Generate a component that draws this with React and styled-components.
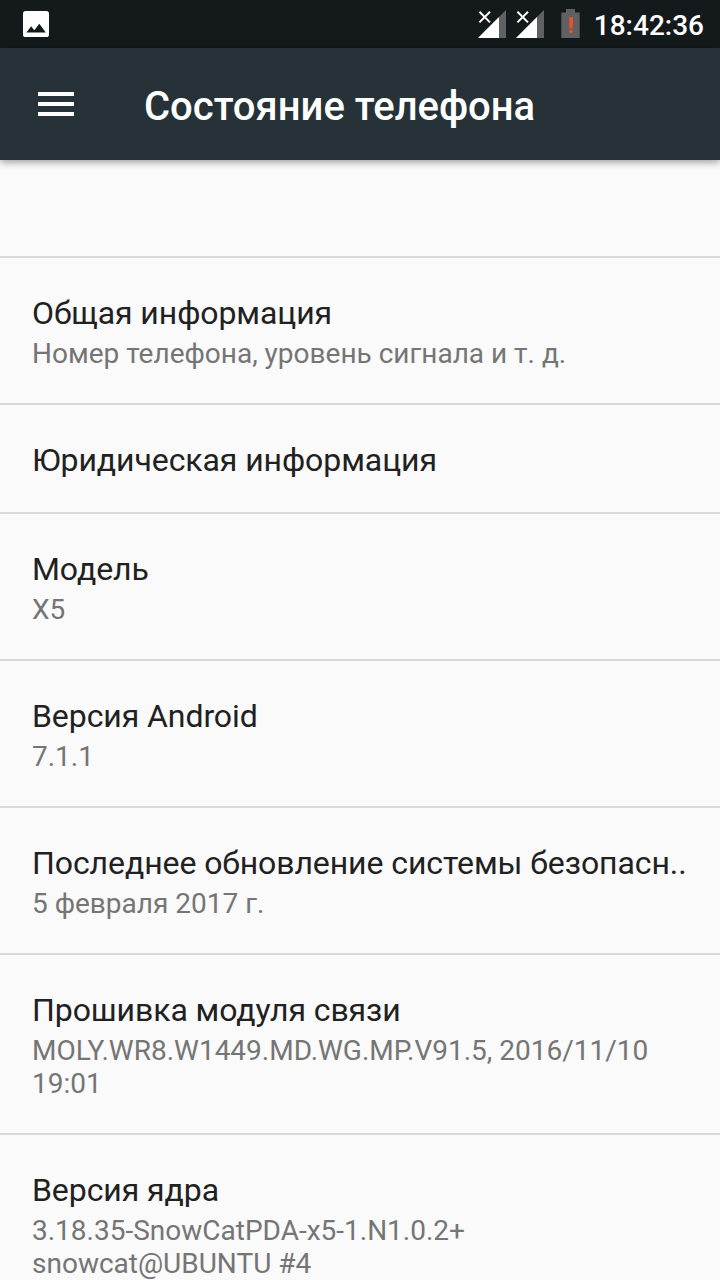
import styled, { createGlobalStyle } from "styled-components";

const GlobalStyle = createGlobalStyle`
    body {
        margin: 0;
        background-color: #fafafa;
        font-family: Roboto, "Noto Sans", sans-serif;
    }
`
const StyleScreen = styled.div`
    display: flex;
    flex-direction: column;
    width: 720px;
    height: 1280px;
    overflow: hidden;
    background-color: #fafafa;
`
const StyleStatusBar = styled.div`
    display: flex;
    flex: none;
    align-items: center;
    justify-content: space-between;
    height: 48px;
    padding: 0 16px 0 22px;
    box-sizing: border-box;
    background-color: #14191c;
    svg {
        display: block;
    }
`
const StyleStatusIcons = styled.div`
    display: flex;
    align-items: center;
`
const StyleSignal = styled.svg`
    margin-right: 8px;
`
const StyleBattery = styled.svg`
    margin: 0 14px 0 8px;
`
const StyleClock = styled.span`
    font-size: 28px;
    font-weight: 500;
    line-height: 48px;
    color: #ffffff;
    padding-top: 4px;
`
const StyleToolbar = styled.header`
    display: flex;
    flex: none;
    align-items: center;
    height: 112px;
    padding-left: 38px;
    box-sizing: border-box;
    background-color: #273238;
    box-shadow: 0 2px 8px rgba(0, 0, 0, 0.4);
    h1 {
        margin: 0 0 0 70px;
        padding-top: 6px;
        font-size: 40px;
        font-weight: 500;
        line-height: 48px;
        color: #ffffff;
        white-space: nowrap;
    }
`
const StyleMenuButton = styled.button`
    display: grid;
    gap: 6px;
    width: 36px;
    padding: 0;
    border: none;
    background: none;
    cursor: pointer;
    span {
        height: 4px;
        background-color: #ffffff;
    }
`
const StyleList = styled.main`
    padding-top: 96px;
`
const StyleRow = styled.section`
    padding: 32px;
    border-top: 2px solid #dadada;
    h2 {
        margin: 0;
        padding-top: 4px;
        font-size: 32px;
        font-weight: 400;
        line-height: 39px;
        letter-spacing: -0.08px;
        color: #212121;
        white-space: nowrap;
    }
    p {
        margin: 0;
        padding: 4px 0 1px;
        font-size: 28px;
        line-height: 33px;
        color: #757575;
        white-space: pre-line;
    }
`

const rows = [
    { title: "Общая информация", summary: "Номер телефона, уровень сигнала и т. д." },
    { title: "Юридическая информация" },
    { title: "Модель", summary: "X5" },
    { title: "Версия Android", summary: "7.1.1" },
    { title: "Последнее обновление системы безопасн..", summary: "5 февраля 2017 г." },
    { title: "Прошивка модуля связи", summary: "MOLY.WR8.W1449.MD.WG.MP.V91.5, 2016/11/10\n19:01" },
    { title: "Версия ядра", summary: "3.18.35-SnowCatPDA-x5-1.N1.0.2+\nsnowcat@UBUNTU #4" },
];

function Signal() {
    return (
      <StyleSignal width="30" height="30" viewBox="0 0 30 30">
        <path d="M1 29 29 1v28z" fill="#5f6162" />
        <path d="M1 29 22 8v21z" fill="#ffffff" />
        <path d="m2.4 2.8 10.6 10.6M13 2.8 2.4 13.4" stroke="#ffffff" strokeWidth="2" />
      </StyleSignal>
    )
}

function App() {
    return (
      <StyleScreen>
        <GlobalStyle />
        <StyleStatusBar>
            <svg width="28" height="28" viewBox="0 0 28 28">
                <rect x="1" y="1" width="26" height="26" rx="2.6" fill="#ffffff" />
                <path d="m4.4 22.6 4.7-6.4 3.2 4 5-6.4 6.5 8.8z" fill="#14191c" />
            </svg>
            <StyleStatusIcons>
                <Signal />
                <Signal />
                <StyleBattery width="19" height="30" viewBox="0 0 19 30">
                    <path d="M5 0h9v3.5h4.7V29H.3V3.5H5z" fill="#5f6162" />
                    <path d="M8.2 8.2H12l-.4 11.2h-3z" fill="#f4511e" />
                    <ellipse cx="10.1" cy="22.4" rx="2" ry="1.5" fill="#f4511e" />
                </StyleBattery>
                <StyleClock>18:42:36</StyleClock>
            </StyleStatusIcons>
        </StyleStatusBar>
        <StyleToolbar>
            <StyleMenuButton aria-label="Меню">
                <span />
                <span />
                <span />
            </StyleMenuButton>
            <h1>Состояние телефона</h1>
        </StyleToolbar>
        <StyleList>
            {rows.map((row) => (
                <StyleRow key={row.title}>
                    <h2>{row.title}</h2>
                    {row.summary && <p>{row.summary}</p>}
                </StyleRow>
            ))}
        </StyleList>
      </StyleScreen>
    )
}

export default App
